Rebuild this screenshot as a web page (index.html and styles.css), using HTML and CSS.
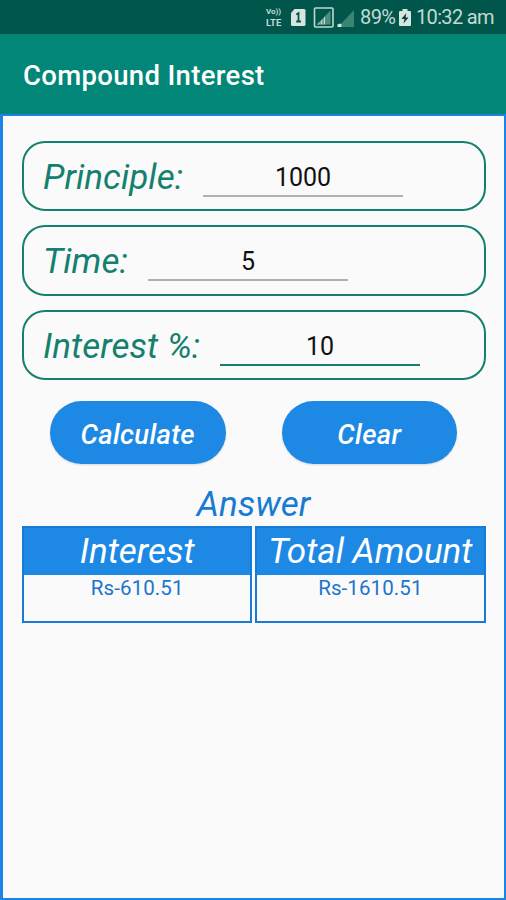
FILE: index.html
```html
<!DOCTYPE html>
<html lang="en">
<head>
<meta charset="utf-8">
<title>Compound Interest</title>
<link rel="stylesheet" href="styles.css">
</head>
<body>
<div class="status">
  <div class="volte"><span class="vo">Vo))</span><span class="lte">LTE</span></div>
  <svg class="sim" width="15" height="17" viewBox="0 0 15 17"><path d="M3.500 0H13a1.500 1.500 0 0 1 1.500 1.500V15.500A1.500 1.500 0 0 1 13 17H1.500A1.500 1.500 0 0 1 0 15.500V4z" fill="#d5e6e1"/><path d="M5.300 5.500L7.500 4.200V12.500M5.200 12.500H10" fill="none" stroke="#075348" stroke-width="1.800"/></svg>
  <svg class="signals" width="42" height="21" viewBox="0 0 42 21"><rect x="1.500" y="1" width="18.500" height="19" rx="1" fill="none" stroke="#bed8d1" stroke-width="1.600"/><path d="M4 17.500L17.500 3.500V17.500z" fill="#4c8d7f"/><path d="M4 17.500L12 9.500V17.500z" fill="#bed8d1"/><path d="M7 13v5M10 10v8" stroke="#075348" stroke-width=".8"/><path d="M25 20L41 3V20z" fill="#3b8575"/><path d="M24.500 20V17.500L27 16.500L28.500 17.500V20z" fill="#d5e6e1"/></svg>
  <span class="percent">89%</span>
  <svg class="battery" width="12" height="17" viewBox="0 0 12 17"><path d="M3.500 0h5v2H11a1 1 0 0 1 1 1v13a1 1 0 0 1-1 1H1a1 1 0 0 1-1-1V3a1 1 0 0 1 1-1h2.500z" fill="#d5e6e1"/><path d="M7.300 4L2.500 10h3L4.500 14.500 9.500 8.500H6.600z" fill="#073e36"/></svg>
  <span class="clock">10:32 am</span>
</div>
<header class="appbar"><h1>Compound Interest</h1></header>
<main class="screen">
  <section class="fields">
    <div class="field"><span class="label principle">Principle:</span><span class="value">1000</span></div>
    <div class="field"><span class="label time">Time:</span><span class="value">5</span></div>
    <div class="field"><span class="label rate">Interest %:</span><span class="value focused">10</span></div>
  </section>
  <div class="actions">
    <button type="button">Calculate</button>
    <button type="button">Clear</button>
  </div>
  <h2>Answer</h2>
  <section class="results">
    <div class="result"><h3>Interest</h3><p>Rs-610.51</p></div>
    <div class="result"><h3>Total Amount</h3><p>Rs-1610.51</p></div>
  </section>
</main>
</body>
</html>
```
FILE: styles.css
```css
* { box-sizing: border-box; }
body {
  margin: 0;
  width: 506px;
  height: 900px;
  display: flex;
  flex-direction: column;
  overflow: hidden;
  background: #fafafa;
  font-family: Roboto, sans-serif;
}
h1, h2, h3, p { margin: 0; }
.status {
  height: 34px;
  flex: none;
  display: flex;
  align-items: center;
  padding-left: 266px;
  background: #00564a;
  color: #c5dad5;
  white-space: nowrap;
}
.volte { width: 18px; display: flex; flex-direction: column; font-weight: 700; }
.vo { font-size: 8px; line-height: 10px; }
.lte { font-size: 9.5px; line-height: 11px; }
.sim { margin-left: 7px; }
.signals { margin-left: 7px; }
.percent { width: 36px; margin-left: 5px; font-size: 20px; letter-spacing: -0.6px; }
.battery { margin-left: 3px; }
.clock { margin-left: 5px; font-size: 20px; letter-spacing: -0.65px; }
.appbar {
  height: 80px;
  flex: none;
  display: flex;
  align-items: center;
  padding: 3px 0 0 23px;
  background: #028677;
  color: #fff;
}
h1 { font-size: 27.5px; font-weight: 500; line-height: 32px; letter-spacing: 0.33px; white-space: nowrap; }
.screen {
  flex: 1;
  border: 2px solid #1c84e4;
  border-left-width: 3px;
  padding: 25px 19px 0;
}
.fields { display: flex; flex-direction: column; gap: 14px; }
.field {
  height: 70.4px;
  width: 464px;
  display: flex;
  align-items: flex-start;
  border: 2.5px solid #14806e;
  border-radius: 23px;
  padding: 12px 0 0 19px;
}
.label {
  color: #14806e;
  font-size: 35px;
  font-style: italic;
  line-height: 46px;
  letter-spacing: 0.05px;
  white-space: nowrap;
}
.principle { width: 160px; }
.time { width: 105px; }
.rate { width: 177px; }
.value {
  width: 200px;
  height: 42px;
  border-bottom: 2px solid #b0b0b0;
  color: #111;
  font-size: 25px;
  line-height: 46px;
  text-align: center;
}
.value.focused { border-color: #14806e; }
.actions { display: flex; gap: 56px; padding: 21px 0 0 28px; }
button {
  width: 175.5px;
  height: 63px;
  padding: 5px 0 0;
  border: 0;
  border-radius: 32px;
  background: #1e88e5;
  box-shadow: 0 1px 2px #0002;
  color: #fff;
  font: italic 500 27.500px/32px Roboto, sans-serif;
  letter-spacing: 0.3px;
}
h2 {
  margin-top: 19px;
  height: 43px;
  color: #187bd2;
  font-size: 35px;
  font-style: italic;
  font-weight: 400;
  line-height: 43px;
  text-align: center;
}
.results { display: flex; gap: 3px; width: 463.5px; }
.result { flex: 1; height: 97px; border: 2px solid #187bd6; }
h3 {
  height: 47px;
  background: #1e88e5;
  color: #fff;
  font-size: 35px;
  font-style: italic;
  font-weight: 400;
  line-height: 47px;
  text-align: center;
  white-space: nowrap;
}
.result p { color: #2074cc; font-size: 20.500px; line-height: 27px; letter-spacing: 0.1px; text-align: center; }
```
